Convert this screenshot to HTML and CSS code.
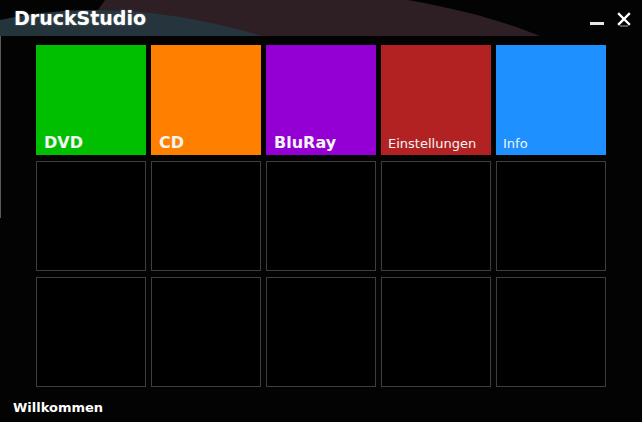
FILE: index.html
```html
<!DOCTYPE html>
<html>

<head>
    <meta name="viewport" content="width=device-width, initial-scale=1.0">
    <title>DruckStudio</title>
    <link rel="stylesheet" href="styles.css">
</head>

<body>
    <div class="window">
        <!-- Titelleiste -->
        <header class="titlebar">
            <svg class="titlebar-bg" width="642" height="36" viewBox="0 0 642 36">
                <path d="M105,0 L408,0 C465,10 505,22 540,36 L80,36 Z" fill="#2e1f24" />
                <path d="M0,20 Q120,-6 262,36 L0,36 Z" fill="#26373f" fill-opacity="0.94" />
            </svg>
            <h1 class="title">DruckStudio</h1>
            <div class="window-buttons">
                <span class="btn-min"></span>
                <svg class="btn-close" width="14" height="18" viewBox="0 0 14 18">
                    <path d="M3,14 L11,14" stroke="#555" stroke-width="2" />
                    <path d="M2,2 L12,12 M12,2 L2,12" stroke="#fff" stroke-width="2.4" stroke-linecap="square" />
                </svg>
            </div>
        </header>

        <main class="content">
            <div class="scroll-line"></div>
            <section class="tiles">
                <a class="tile tile-green big">DVD</a>
                <a class="tile tile-orange big">CD</a>
                <a class="tile tile-purple big">BluRay</a>
                <a class="tile tile-red">Einstellungen</a>
                <a class="tile tile-blue">Info</a>

                <div class="tile empty"></div>
                <div class="tile empty"></div>
                <div class="tile empty"></div>
                <div class="tile empty"></div>
                <div class="tile empty"></div>

                <div class="tile empty"></div>
                <div class="tile empty"></div>
                <div class="tile empty"></div>
                <div class="tile empty"></div>
                <div class="tile empty"></div>
            </section>
        </main>

        <footer class="statusbar">Willkommen</footer>
    </div>
</body>

</html>
```

FILE: styles.css
```css
/* Allgemein */
body {
    margin: 0;
    padding: 0;
    background: #030303;
    color: #ffffff;
    font-family: 'DejaVu Sans', Verdana, sans-serif;
}

.window {
    width: 642px;
    height: 422px;
    display: flex;
    flex-direction: column;
    overflow: hidden;
}

/* Titelleiste */
.titlebar {
    position: relative;
    height: 36px;
    flex-shrink: 0;
    display: flex;
    align-items: center;
    justify-content: space-between;
    background: #030303;
}

.titlebar-bg {
    position: absolute;
    top: 0;
    left: 0;
}

.title {
    position: relative;
    margin: 0 0 0 14px;
    font-size: 19px;
    font-weight: bold;
    text-shadow: 0 0 2px rgba(255, 255, 255, 0.35);
}

.window-buttons {
    position: relative;
    display: flex;
    align-items: center;
    gap: 13px;
    margin-right: 11px;
    padding-top: 6px;
}

.btn-min {
    display: block;
    width: 14px;
    height: 3px;
    margin-top: 4px;
    background: #e6e6e6;
}

/* Kacheln */
.content {
    position: relative;
    flex: 1;
}

.scroll-line {
    position: absolute;
    left: 0;
    top: 0;
    width: 1px;
    height: 182px;
    background: #5a5a5a;
}

.tiles {
    display: grid;
    grid-template-columns: repeat(5, 110px);
    grid-auto-rows: 110px;
    column-gap: 5px;
    row-gap: 6px;
    margin: 9px 0 0 36px;
}

.tile {
    box-sizing: border-box;
    display: flex;
    align-items: flex-end;
    padding: 0 0 4px 7px;
    font-size: 13px;
    color: #f4f4f4;
}

.tile.big {
    padding: 0 0 3px 8px;
    font-size: 16px;
    font-weight: bold;
}

.tile-green { background: #00bf00; }
.tile-orange { background: #ff8000; }
.tile-purple { background: #9400d3; }
.tile-red { background: #b22222; }
.tile-blue { background: #1e90ff; }

.tile.empty {
    border: 1px solid #3e3e3e;
    background: #000;
}

/* Statusleiste */
.statusbar {
    height: 21px;
    padding-top: 5px;
    padding-left: 13px;
    font-size: 13px;
    font-weight: bold;
    line-height: 14px;
}
```
